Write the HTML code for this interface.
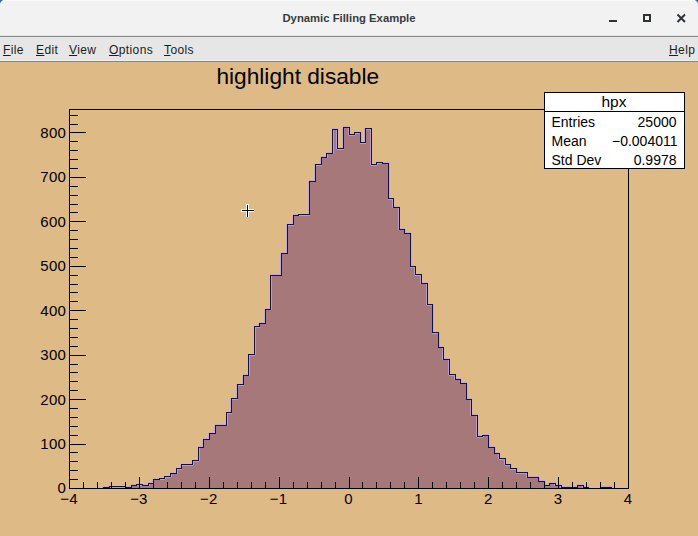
<!DOCTYPE html>
<html><head><meta charset="utf-8"><style>
html,body{margin:0;padding:0;width:698px;height:536px;overflow:hidden;background:#deba87;}
body{position:relative;font-family:"Liberation Sans",sans-serif;}
#corner{position:absolute;left:0;top:0;width:698px;height:10px;background:#3a6898;}
#titlebar{position:absolute;left:0;top:0;width:698px;height:35px;background:#f2f2f2;border-bottom:1px solid #e6e6e6;border-radius:5px 5px 0 0;box-shadow:inset 0 1px 0 #fafafa;}
#tbline{position:absolute;left:0;top:36px;width:698px;height:1px;background:#878787;}
#menubar{position:absolute;left:0;top:37px;width:698px;height:23px;background:#e6e6e6;border-bottom:1px solid #efefef;}
#mbline{position:absolute;left:0;top:61px;width:698px;height:1px;background:#878787;}
.mi{position:absolute;top:6px;font-size:12px;letter-spacing:0.4px;color:#1c1c1c;}
.mi u{text-decoration:underline;}
svg{position:absolute;left:0;top:0;}
</style></head><body>
<div id="corner"></div><div id="titlebar"></div><div id="tbline"></div><div id="mbline"></div>
<div id="menubar">
<span class="mi" style="left:3px"><u>F</u>ile</span>
<span class="mi" style="left:36px"><u>E</u>dit</span>
<span class="mi" style="left:69px"><u>V</u>iew</span>
<span class="mi" style="left:109px"><u>O</u>ptions</span>
<span class="mi" style="left:164px"><u>T</u>ools</span>
<span class="mi" style="left:669px"><u>H</u>elp</span>
</div>
<svg width="698" height="536" viewBox="0 0 698 536" style="top:0">
<text x="349" y="22" text-anchor="middle" font-family="Liberation Sans" font-weight="bold" font-size="11.3" fill="#363c40">Dynamic Filling Example</text>
<g fill="none" stroke="#2e3436" stroke-width="2">
<path d="M609,21H617"/>
<rect x="644" y="15" width="6" height="6"/>
<path d="M677.5,14.5L685,22M685,14.5L677.5,22"/>
</g>
</svg>
<svg width="698" height="474" viewBox="0 62 698 474" style="top:62px">
<rect x="0" y="62" width="698" height="474" fill="#deba87"/>
<text x="297.8" y="84" text-anchor="middle" font-family="Liberation Sans" font-size="22.7" fill="#000">highlight disable</text>
<path d="M69,488 L70,488 L75,488 L75,488 L81,488 L81,488 L86,488 L86,488 L92,488 L92,488 L97,488 L97,488 L103,488 L103,487 L109,487 L109,486 L114,486 L114,486 L120,486 L120,486 L125,486 L125,487 L131,487 L131,485 L136,485 L136,484 L142,484 L142,485 L148,485 L148,483 L153,483 L153,479 L159,479 L159,478 L164,478 L164,476 L170,476 L170,473 L176,473 L176,468 L181,468 L181,464 L187,464 L187,464 L192,464 L192,460 L198,460 L198,447 L203,447 L203,439 L209,439 L209,433 L215,433 L215,425 L220,425 L220,425 L226,425 L226,412 L231,412 L231,398 L237,398 L237,384 L243,384 L243,375 L248,375 L248,354 L254,354 L254,326 L259,326 L259,323 L265,323 L265,309 L270,309 L270,275 L276,275 L276,275 L281,275 L281,253 L287,253 L287,224 L293,224 L293,215 L298,215 L298,214 L304,214 L304,214 L309,214 L309,181 L315,181 L315,164 L321,164 L321,157 L326,157 L326,153 L332,153 L332,129 L337,129 L337,148 L343,148 L343,127 L349,127 L349,134 L354,134 L354,132 L360,132 L360,142 L365,142 L365,128 L371,128 L371,164 L376,164 L376,162 L382,162 L382,163 L388,163 L388,198 L393,198 L393,207 L399,207 L399,229 L404,229 L404,233 L410,233 L410,266 L415,266 L415,274 L421,274 L421,283 L427,283 L427,304 L432,304 L432,332 L438,332 L438,347 L443,347 L443,359 L449,359 L449,374 L455,374 L455,379 L460,379 L460,383 L466,383 L466,399 L471,399 L471,415 L477,415 L477,436 L482,436 L482,435 L488,435 L488,447 L494,447 L494,453 L499,453 L499,458 L505,458 L505,464 L510,464 L510,468 L516,468 L516,472 L522,472 L522,472 L527,472 L527,477 L533,477 L533,477 L538,477 L538,481 L544,481 L544,485 L549,485 L549,483 L555,483 L555,485 L561,485 L561,487 L566,487 L566,487 L572,487 L572,487 L577,487 L577,485 L583,485 L583,487 L588,487 L588,488 L594,488 L594,488 L600,488 L600,487 L605,487 L605,487 L611,487 L611,488 L616,488 L616,488 L622,488 L622,488 L628,488 L628,488 Z" fill="#a6787a"/>
<path d="M102.5,487V489 M103,486.5H110 M108.5,486V488 M109,487.5H115 M114,487.5H121 M120,487.5H126 M124.5,486V488 M125,486.5H132 M130.5,485V488 M131,484.5H137 M137.5,484V486 M136,485.5H143 M143.5,484V486 M142,484.5H149 M149.5,483V486 M148,482.5H154 M152.5,479V484 M153,478.5H160 M158.5,478V480 M159,479.5H165 M165.5,476V479 M164,477.5H171 M171.5,473V477 M170,472.5H177 M177.5,468V474 M176,469.5H182 M180.5,464V469 M181,465.5H188 M187,465.5H193 M193.5,460V465 M192,461.5H199 M199.5,447V461 M198,446.5H204 M202.5,439V448 M203,438.5H210 M208.5,433V440 M209,432.5H216 M214.5,425V434 M215,424.5H221 M220,424.5H227 M227.5,412V426 M226,413.5H232 M230.5,398V413 M231,399.5H238 M236.5,384V399 M237,385.5H244 M242.5,375V385 M243,374.5H249 M249.5,354V376 M248,355.5H255 M255.5,326V355 M254,327.5H260 M258.5,323V327 M259,322.5H266 M264.5,309V324 M265,308.5H271 M271.5,275V310 M270,274.5H277 M276,274.5H282 M280.5,253V276 M281,252.5H288 M286.5,224V254 M287,225.5H294 M292.5,215V225 M293,214.5H299 M299.5,214V216 M298,215.5H305 M304,215.5H310 M308.5,181V215 M309,180.5H316 M314.5,164V182 M315,165.5H322 M320.5,157V165 M321,156.5H327 M327.5,153V158 M326,152.5H333 M333.5,129V154 M332,128.5H338 M336.5,129V149 M337,149.5H344 M342.5,127V149 M343,126.5H350 M348.5,127V135 M349,135.5H355 M355.5,132V135 M354,133.5H361 M361.5,132V143 M360,143.5H366 M364.5,128V143 M365,129.5H372 M370.5,128V165 M371,165.5H377 M377.5,162V165 M376,163.5H383 M383.5,162V164 M382,162.5H389 M389.5,163V199 M388,199.5H394 M392.5,198V208 M393,206.5H400 M398.5,207V230 M399,228.5H405 M405.5,229V234 M404,232.5H411 M411.5,233V267 M410,267.5H416 M414.5,266V275 M415,275.5H422 M420.5,274V284 M421,282.5H428 M426.5,283V305 M427,305.5H433 M433.5,304V333 M432,333.5H439 M439.5,332V348 M438,346.5H444 M442.5,347V360 M443,358.5H450 M448.5,359V375 M449,375.5H456 M454.5,374V380 M455,378.5H461 M461.5,379V384 M460,382.5H467 M467.5,383V400 M466,398.5H472 M470.5,399V416 M471,414.5H478 M476.5,415V437 M477,437.5H483 M483.5,435V437 M482,434.5H489 M489.5,435V448 M488,446.5H495 M495.5,447V454 M494,452.5H500 M498.5,453V459 M499,459.5H506 M504.5,458V465 M505,465.5H511 M511.5,464V469 M510,469.5H517 M517.5,468V473 M516,473.5H523 M522,473.5H528 M526.5,472V478 M527,476.5H534 M533,476.5H539 M539.5,477V482 M538,480.5H545 M545.5,481V486 M544,484.5H550 M548.5,483V486 M549,482.5H556 M554.5,483V486 M555,484.5H562 M560.5,485V488 M561,486.5H567 M566,486.5H573 M572,486.5H578 M576.5,485V488 M577,484.5H584 M582.5,485V488 M583,486.5H589 M589.5,487V489 M601.5,487V489 M600,486.5H606 M605,486.5H612 M610.5,487V489" fill="none" stroke="#b8a4f0" stroke-opacity="0.8" stroke-width="1" shape-rendering="crispEdges"/>
<path d="M69.5,488.5 L70.5,488.5 L75.5,488.5 L75.5,488.5 L81.5,488.5 L81.5,488.5 L86.5,488.5 L86.5,488.5 L92.5,488.5 L92.5,488.5 L97.5,488.5 L97.5,488.5 L103.5,488.5 L103.5,487.5 L109.5,487.5 L109.5,486.5 L114.5,486.5 L114.5,486.5 L120.5,486.5 L120.5,486.5 L125.5,486.5 L125.5,487.5 L131.5,487.5 L131.5,485.5 L136.5,485.5 L136.5,484.5 L142.5,484.5 L142.5,485.5 L148.5,485.5 L148.5,483.5 L153.5,483.5 L153.5,479.5 L159.5,479.5 L159.5,478.5 L164.5,478.5 L164.5,476.5 L170.5,476.5 L170.5,473.5 L176.5,473.5 L176.5,468.5 L181.5,468.5 L181.5,464.5 L187.5,464.5 L187.5,464.5 L192.5,464.5 L192.5,460.5 L198.5,460.5 L198.5,447.5 L203.5,447.5 L203.5,439.5 L209.5,439.5 L209.5,433.5 L215.5,433.5 L215.5,425.5 L220.5,425.5 L220.5,425.5 L226.5,425.5 L226.5,412.5 L231.5,412.5 L231.5,398.5 L237.5,398.5 L237.5,384.5 L243.5,384.5 L243.5,375.5 L248.5,375.5 L248.5,354.5 L254.5,354.5 L254.5,326.5 L259.5,326.5 L259.5,323.5 L265.5,323.5 L265.5,309.5 L270.5,309.5 L270.5,275.5 L276.5,275.5 L276.5,275.5 L281.5,275.5 L281.5,253.5 L287.5,253.5 L287.5,224.5 L293.5,224.5 L293.5,215.5 L298.5,215.5 L298.5,214.5 L304.5,214.5 L304.5,214.5 L309.5,214.5 L309.5,181.5 L315.5,181.5 L315.5,164.5 L321.5,164.5 L321.5,157.5 L326.5,157.5 L326.5,153.5 L332.5,153.5 L332.5,129.5 L337.5,129.5 L337.5,148.5 L343.5,148.5 L343.5,127.5 L349.5,127.5 L349.5,134.5 L354.5,134.5 L354.5,132.5 L360.5,132.5 L360.5,142.5 L365.5,142.5 L365.5,128.5 L371.5,128.5 L371.5,164.5 L376.5,164.5 L376.5,162.5 L382.5,162.5 L382.5,163.5 L388.5,163.5 L388.5,198.5 L393.5,198.5 L393.5,207.5 L399.5,207.5 L399.5,229.5 L404.5,229.5 L404.5,233.5 L410.5,233.5 L410.5,266.5 L415.5,266.5 L415.5,274.5 L421.5,274.5 L421.5,283.5 L427.5,283.5 L427.5,304.5 L432.5,304.5 L432.5,332.5 L438.5,332.5 L438.5,347.5 L443.5,347.5 L443.5,359.5 L449.5,359.5 L449.5,374.5 L455.5,374.5 L455.5,379.5 L460.5,379.5 L460.5,383.5 L466.5,383.5 L466.5,399.5 L471.5,399.5 L471.5,415.5 L477.5,415.5 L477.5,436.5 L482.5,436.5 L482.5,435.5 L488.5,435.5 L488.5,447.5 L494.5,447.5 L494.5,453.5 L499.5,453.5 L499.5,458.5 L505.5,458.5 L505.5,464.5 L510.5,464.5 L510.5,468.5 L516.5,468.5 L516.5,472.5 L522.5,472.5 L522.5,472.5 L527.5,472.5 L527.5,477.5 L533.5,477.5 L533.5,477.5 L538.5,477.5 L538.5,481.5 L544.5,481.5 L544.5,485.5 L549.5,485.5 L549.5,483.5 L555.5,483.5 L555.5,485.5 L561.5,485.5 L561.5,487.5 L566.5,487.5 L566.5,487.5 L572.5,487.5 L572.5,487.5 L577.5,487.5 L577.5,485.5 L583.5,485.5 L583.5,487.5 L588.5,487.5 L588.5,488.5 L594.5,488.5 L594.5,488.5 L600.5,488.5 L600.5,487.5 L605.5,487.5 L605.5,487.5 L611.5,487.5 L611.5,488.5 L616.5,488.5 L616.5,488.5 L622.5,488.5 L622.5,488.5 L628.5,488.5 " fill="none" stroke="#14104e" stroke-width="1" shape-rendering="crispEdges"/>
<rect x="69.5" y="109.5" width="559" height="379" fill="none" stroke="#000" stroke-width="1" shape-rendering="crispEdges"/>
<path d="M69,488.5H86 M69,479.5H78 M69,470.5H78 M69,461.5H78 M69,452.5H78 M69,444.5H86 M69,435.5H78 M69,426.5H78 M69,417.5H78 M69,408.5H78 M69,399.5H86 M69,390.5H78 M69,381.5H78 M69,372.5H78 M69,364.5H78 M69,355.5H86 M69,346.5H78 M69,337.5H78 M69,328.5H78 M69,319.5H78 M69,310.5H86 M69,301.5H78 M69,292.5H78 M69,284.5H78 M69,275.5H78 M69,266.5H86 M69,257.5H78 M69,248.5H78 M69,239.5H78 M69,230.5H78 M69,221.5H86 M69,212.5H78 M69,204.5H78 M69,195.5H78 M69,186.5H78 M69,177.5H86 M69,168.5H78 M69,159.5H78 M69,150.5H78 M69,141.5H78 M69,132.5H86 M69,124.5H78 M69,115.5H78 M69.5,489V477 M83.5,489V482 M97.5,489V482 M111.5,489V482 M125.5,489V482 M139.5,489V477 M153.5,489V482 M167.5,489V482 M181.5,489V482 M195.5,489V482 M209.5,489V477 M223.5,489V482 M237.5,489V482 M251.5,489V482 M265.5,489V482 M279.5,489V477 M293.5,489V482 M307.5,489V482 M321.5,489V482 M335.5,489V482 M349.5,489V477 M362.5,489V482 M376.5,489V482 M390.5,489V482 M404.5,489V482 M418.5,489V477 M432.5,489V482 M446.5,489V482 M460.5,489V482 M474.5,489V482 M488.5,489V477 M502.5,489V482 M516.5,489V482 M530.5,489V482 M544.5,489V482 M558.5,489V477 M572.5,489V482 M586.5,489V482 M600.5,489V482 M614.5,489V482 M628.5,489V477" stroke="#000" stroke-width="1" shape-rendering="crispEdges"/>
<g font-family="Liberation Sans" font-size="15" letter-spacing="0.2" fill="#000"><text x="66" y="493.4" text-anchor="end">0</text><text x="66" y="448.9" text-anchor="end">100</text><text x="66" y="404.5" text-anchor="end">200</text><text x="66" y="360.0" text-anchor="end">300</text><text x="66" y="315.6" text-anchor="end">400</text><text x="66" y="271.1" text-anchor="end">500</text><text x="66" y="226.7" text-anchor="end">600</text><text x="66" y="182.3" text-anchor="end">700</text><text x="66" y="137.8" text-anchor="end">800</text><text x="69.0" y="504" text-anchor="middle">−4</text><text x="138.9" y="504" text-anchor="middle">−3</text><text x="208.8" y="504" text-anchor="middle">−2</text><text x="278.6" y="504" text-anchor="middle">−1</text><text x="348.5" y="504" text-anchor="middle">0</text><text x="418.4" y="504" text-anchor="middle">1</text><text x="488.2" y="504" text-anchor="middle">2</text><text x="558.1" y="504" text-anchor="middle">3</text><text x="628.0" y="504" text-anchor="middle">4</text></g>
<g>
<rect x="544.5" y="92.5" width="140" height="76" fill="#fff" stroke="#000" stroke-width="1" shape-rendering="crispEdges"/>
<path d="M544,111.5H685" stroke="#000" stroke-width="1" shape-rendering="crispEdges"/>
<g font-family="Liberation Sans" font-size="14" fill="#000">
<text x="614" y="106.8" text-anchor="middle" font-size="15.5">hpx</text>
<text x="551.5" y="126.5">Entries</text>
<text x="676.5" y="126.5" text-anchor="end">25000</text>
<text x="551.5" y="145.8">Mean</text>
<text x="677.5" y="145.8" text-anchor="end">−0.004011</text>
<text x="551.5" y="164.5">Std Dev</text>
<text x="676.5" y="164.5" text-anchor="end">0.9978</text>
</g>
</g>
<g stroke-linecap="butt">
<path d="M241,210.5H254M247.5,204V217" stroke="#fff" stroke-width="3"/>
<path d="M241.5,210.5H253.5M247.5,204.5V216.5" stroke="#000" stroke-width="1" shape-rendering="crispEdges"/>
</g>
</svg>
</body></html>
